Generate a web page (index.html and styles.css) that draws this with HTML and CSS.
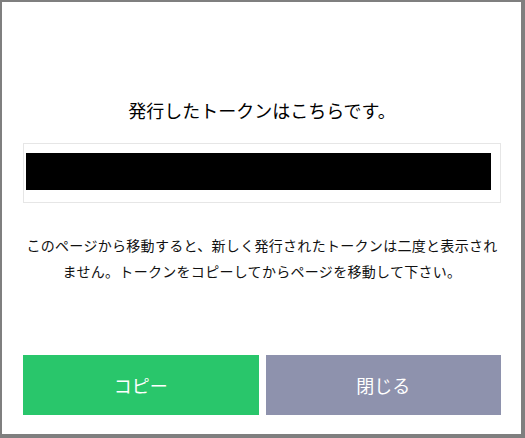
FILE: index.html
```html
<!DOCTYPE html>
<html lang="ja">
<head>
    <meta charset="utf-8" />
    <title>トークン発行</title>
    <link rel="stylesheet" href="styles.css">
</head>
<body>
    <div class="modal">
        <h2 class="modal-title">発行したトークンはこちらです。</h2>

        <div class="token-box">
            <div class="token-value"></div>
        </div>

        <p class="notice">
            このページから移動すると、新しく発行されたトークンは二度と表示されません。トークンをコピーしてからページを移動して下さい。
        </p>

        <div class="actions">
            <button class="button button-copy">コピー</button>
            <button class="button button-close">閉じる</button>
        </div>
    </div>
</body>
</html>
```

FILE: styles.css
```css
body {
    margin: 0;
    height: 100vh;
    background-color: #7f7f7f;
    font-family: "Noto Sans CJK JP", "Noto Sans", sans-serif;
    color: #000;
}

.modal {
    box-sizing: border-box;
    width: 519px;
    height: 432px;
    margin: 2px 0 0 2px;
    padding: 0 20px 0 21px;
    background: #fff;
    display: flex;
    flex-direction: column;
}

.modal-title {
    margin: 96px 0 0;
    font-size: 18px;
    font-weight: normal;
    line-height: 24px;
    text-align: center;
}

.token-box {
    margin-top: 21px;
    height: 60px;
    box-sizing: border-box;
    border: 1px solid #e6e6e6;
    padding: 9px 9px 0 2px;
}

.token-value {
    height: 37px;
    background: #000;
}

.notice {
    margin: 29px 0 0;
    font-size: 14px;
    letter-spacing: 0.3px;
    line-height: 26px;
    text-align: center;
    color: #111;
}

.actions {
    margin-top: auto;
    margin-bottom: 19px;
    display: flex;
    gap: 7px;
}

.button {
    flex: 1;
    height: 60px;
    border: 0;
    border-radius: 0;
    font-family: inherit;
    font-size: 18px;
    color: #fff;
    cursor: pointer;
}

.button-copy {
    background: #29c66b;
}

.button-close {
    background: #8e92ad;
}
```
